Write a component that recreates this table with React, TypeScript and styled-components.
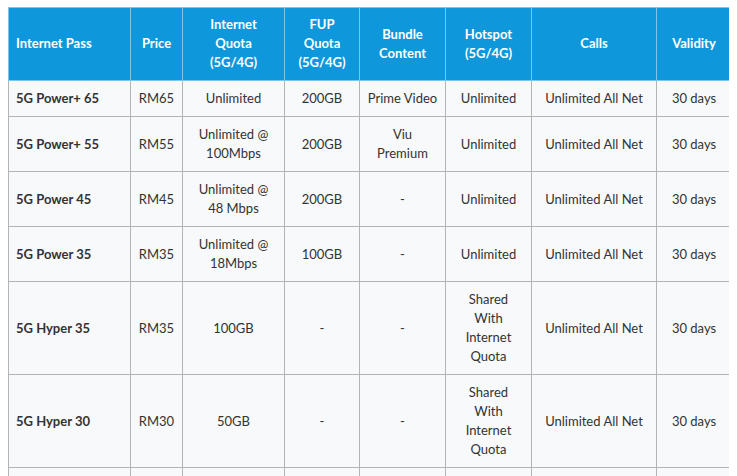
import React from 'react';
import styled, { createGlobalStyle } from 'styled-components';

const GlobalStyle = createGlobalStyle`
  body {
    margin: 7px 8px;
    background: #ffffff;
    font-family: Lato, "Noto Sans", sans-serif;
  }
`;

const Table = styled.table`
  width: 723px;
  border-collapse: collapse;
  table-layout: fixed;
  font-size: 13px;
  line-height: 19px;
  color: #333333;
`;

const HeadCell = styled.th<{ $left?: boolean }>`
  background: #0e97da;
  color: #ffffff;
  font-weight: 700;
  padding: 7px 4px 8px ${(p) => (p.$left ? '7px' : '4px')};
  border: 1px solid #7cc4ea;
  text-align: ${(p) => (p.$left ? 'left' : 'center')};
  vertical-align: middle;
`;

const Cell = styled.td<{ $name?: boolean }>`
  background: #f8f9fb;
  padding: 8px 4px 8px ${(p) => (p.$name ? '7px' : '4px')};
  border: 1px solid #b4b4b4;
  text-align: ${(p) => (p.$name ? 'left' : 'center')};
  font-weight: ${(p) => (p.$name ? 700 : 400)};
  vertical-align: middle;
`;

const columns = [
  { label: 'Internet Pass', width: 122, left: true },
  { label: 'Price', width: 52 },
  { label: 'Internet Quota (5G/4G)', width: 102, lines: ['Internet', 'Quota', '(5G/4G)'] },
  { label: 'FUP Quota (5G/4G)', width: 75, lines: ['FUP', 'Quota', '(5G/4G)'] },
  { label: 'Bundle Content', width: 86, lines: ['Bundle', 'Content'] },
  { label: 'Hotspot (5G/4G)', width: 86, lines: ['Hotspot', '(5G/4G)'] },
  { label: 'Calls', width: 125 },
  { label: 'Validity', width: 75 },
];

type Row = {
  name: string;
  price: string;
  quota: string[];
  fup: string;
  bundle: string[];
  hotspot: string[];
};

const rows: Row[] = [
  { name: '5G Power+ 65', price: 'RM65', quota: ['Unlimited'], fup: '200GB', bundle: ['Prime Video'], hotspot: ['Unlimited'] },
  { name: '5G Power+ 55', price: 'RM55', quota: ['Unlimited @', '100Mbps'], fup: '200GB', bundle: ['Viu', 'Premium'], hotspot: ['Unlimited'] },
  { name: '5G Power 45', price: 'RM45', quota: ['Unlimited @', '48 Mbps'], fup: '200GB', bundle: ['-'], hotspot: ['Unlimited'] },
  { name: '5G Power 35', price: 'RM35', quota: ['Unlimited @', '18Mbps'], fup: '100GB', bundle: ['-'], hotspot: ['Unlimited'] },
  { name: '5G Hyper 35', price: 'RM35', quota: ['100GB'], fup: '-', bundle: ['-'], hotspot: ['Shared', 'With', 'Internet', 'Quota'] },
  { name: '5G Hyper 30', price: 'RM30', quota: ['50GB'], fup: '-', bundle: ['-'], hotspot: ['Shared', 'With', 'Internet', 'Quota'] },
  { name: '5G Hyper 25', price: 'RM25', quota: ['30GB'], fup: '-', bundle: ['-'], hotspot: ['Shared', 'With', 'Internet', 'Quota'] },
];

const Lines: React.FC<{ lines: string[] }> = ({ lines }) => (
  <>
    {lines.map((l, i) => (
      <React.Fragment key={i}>
        {i > 0 && <br />}
        {l}
      </React.Fragment>
    ))}
  </>
);

export default function App() {
  return (
    <>
      <GlobalStyle />
      <Table>
        <colgroup>
          {columns.map((c) => (
            <col key={c.label} style={{ width: c.width }} />
          ))}
        </colgroup>
        <thead>
          <tr>
            {columns.map((c) => (
              <HeadCell key={c.label} $left={c.left}>
                <Lines lines={c.lines ?? [c.label]} />
              </HeadCell>
            ))}
          </tr>
        </thead>
        <tbody>
          {rows.map((r) => (
            <tr key={r.name}>
              <Cell $name>{r.name}</Cell>
              <Cell>{r.price}</Cell>
              <Cell><Lines lines={r.quota} /></Cell>
              <Cell>{r.fup}</Cell>
              <Cell><Lines lines={r.bundle} /></Cell>
              <Cell><Lines lines={r.hotspot} /></Cell>
              <Cell>Unlimited All Net</Cell>
              <Cell>30 days</Cell>
            </tr>
          ))}
        </tbody>
      </Table>
    </>
  );
}
